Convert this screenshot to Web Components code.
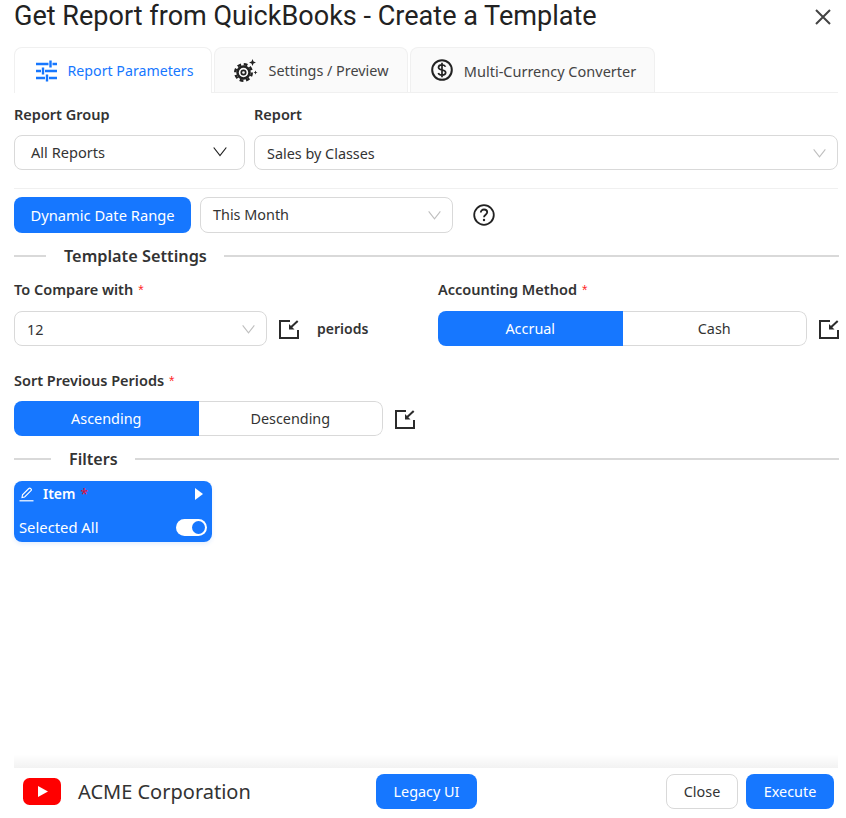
<!DOCTYPE html>
<html lang="en">
<head>
<meta charset="utf-8">
<title>Get Report from QuickBooks</title>
<style>
  html, body { margin: 0; padding: 0; background: #fff; }
  body { font: 14.4px/20px "Noto Sans", "Open Sans", "Liberation Sans", sans-serif; color: #333; }
</style>
</head>
<body>
<report-dialog></report-dialog>

<script>
(function () {
  "use strict";

  const ICONS = {
    sliders: `<svg width="21" height="22" viewBox="0 0 21 22" fill="none" stroke="currentColor" stroke-width="2.4"><path d="M0 4h12.500M16.500 4h4.500M14.500 .5v7M0 11h5M9 11h12M7 7.500v7M0 18h9M13 18h8M11 14.500v7"/></svg>`,
    gear: `<svg width="24" height="24" viewBox="0 0 24 24" fill="none" stroke="#222"><circle cx="9.500" cy="13.500" r="8.300" stroke-width="2.400" stroke-dasharray="3.800 2.720"/><circle cx="9.500" cy="13.500" r="6" stroke-width="2.500"/><circle cx="9.500" cy="13.500" r="2.200" stroke-width="1.700"/><path d="M18.500 0l1 2.500 2.500 1-2.500 1-1 2.500-1-2.500-2.500-1 2.500-1zM21.500 11.500l.6 1.400 1.400.6-1.400.6-.6 1.400-.6-1.400-1.400-.6 1.400-.6z" fill="#222" stroke="none"/></svg>`,
    dollar: `<svg width="22" height="22" viewBox="0 0 22 22" fill="none" stroke="#222"><circle cx="11" cy="11" r="9.800" stroke-width="2"/><path d="M14.500 7.800c-.5-1.300-1.800-2-3.500-2-2 0-3.500 1-3.500 2.600 0 3.500 7.200 1.700 7.200 5.200 0 1.600-1.600 2.600-3.700 2.600-1.800 0-3.200-.8-3.700-2.200M11 3.800v14.400" stroke-width="1.700"/></svg>`,
    close: `<svg width="16" height="16" viewBox="0 0 16 16" fill="none" stroke="#444" stroke-width="2"><path d="M1 1l14 14M15 1L1 15"/></svg>`,
    help: `<svg width="22" height="22" viewBox="0 0 22 22" fill="none" stroke="#222"><circle cx="11" cy="11" r="9.800" stroke-width="1.800"/><path d="M7.800 8.600c0-1.900 1.400-3.100 3.200-3.100s3.200 1.100 3.200 2.800c0 2.400-3.200 2.500-3.200 5" stroke-width="1.800"/><circle cx="11" cy="16" r="1.200" fill="#222" stroke="none"/></svg>`,
    expand: `<svg width="20" height="20" viewBox="0 0 20 20" fill="none" stroke="#2b2b2b" stroke-width="2"><path d="M11 2H1v17h18v-8"/><path d="M18.700 2l-7 6.500"/><path d="M10 5v5.500h5.500z" fill="#2b2b2b" stroke="none"/></svg>`,
    pencil: `<svg width="15" height="15" viewBox="0 0 15 15" fill="none" stroke="#fff" stroke-width="1.100"><path d="M3 10.500l.5-2.700L9.800 1.500c.5-.5 1.300-.5 1.800 0l.4.4c.5.5.5 1.300 0 1.800L5.700 10z"/><path d="M.5 13.800h14" stroke-width="1.200"/></svg>`,
    youtube: `<svg width="38" height="27" viewBox="0 0 38 27"><rect width="38" height="27" rx="6.500" fill="#f00"/><path d="M15 8l10 5.500-10 5.500z" fill="#fff"/></svg>`
  };

  const chevron = (color, size) => `<svg width="${size}" height="${size}" viewBox="0 0 14 14" fill="none" stroke="${color}" stroke-width="1.200"><path d="M.7 2.500l6.300 8 6.300-8"/></svg>`;

  // Plain text button, filled or outlined
  class AppButton extends HTMLElement {
    constructor() {
      super();
      this.attachShadow({ mode: "open" }).innerHTML = `
        <style>
          :host { display: inline-flex; align-items: center; justify-content: center; box-sizing: border-box;
            height: 35px; border-radius: 8px; background: #1677ff; color: #fff; font-size: 14.4px; white-space: nowrap; }
          :host([outline]) { background: #fff; color: #333; border: 1px solid #d9d9d9; }
        </style>
        <slot></slot>`;
    }
  }

  class AppSelect extends HTMLElement {
    static get observedAttributes() { return ["value"]; }
    constructor() {
      super();
      this.attachShadow({ mode: "open" }).innerHTML = `
        <style>
          :host { display: flex; align-items: center; justify-content: space-between; box-sizing: border-box;
            height: 35px; border: 1px solid #d9d9d9; border-radius: 8px; background: #fff;
            padding: 0 11px 0 12px; color: #333; font-size: 14.4px; }
          :host([strong]) { padding: 0 17px 2px 16px; font-size: 14.600px; }
          .arrow { display: flex; }
        </style>
        <span class="value"></span><span class="arrow"></span>`;
    }
    connectedCallback() { this._render(); }
    attributeChangedCallback() { this._render(); }
    _render() {
      this.shadowRoot.querySelector(".value").textContent = this.getAttribute("value") || "";
      this.shadowRoot.querySelector(".arrow").innerHTML = this.hasAttribute("strong")
        ? chevron("#222", 14) : chevron("#bfbfbf", 13);
    }
  }

  class FieldLabel extends HTMLElement {
    constructor() {
      super();
      this.attachShadow({ mode: "open" }).innerHTML = `
        <style>
          :host { display: block; font-size: 14.500px; line-height: 20px; font-weight: 600; color: #333; }
          .req { display: none; color: #ff2a2a; font-weight: 400; font-size: 14px; margin-left: 5px; font-family: "Liberation Sans", sans-serif; }
          :host([required]) .req { display: inline; }
        </style>
        <slot></slot><span class="req">*</span>`;
    }
  }

  // Two part toggle, the first value is the picked one
  class SegToggle extends HTMLElement {
    constructor() {
      super();
      this.attachShadow({ mode: "open" }).innerHTML = `
        <style>
          :host { display: grid; grid-template-columns: 1fr 1fr; box-sizing: border-box; height: 35px;
            border-radius: 8px; overflow: hidden; font-size: 14.4px; }
          span { display: flex; align-items: center; justify-content: center; color: #333; padding-top: 1px; box-sizing: border-box; }
          span.on { background: #1677ff; color: #fff; }
          span.off { border: 1px solid #d9d9d9; border-left: 0; border-radius: 0 8px 8px 0; }
        </style>
        <span class="on"></span><span class="off"></span>`;
    }
    connectedCallback() {
      const [a, b] = (this.getAttribute("options") || "").split("|");
      this.shadowRoot.querySelector(".on").textContent = a;
      this.shadowRoot.querySelector(".off").textContent = b;
    }
  }

  class SectionDivider extends HTMLElement {
    constructor() {
      super();
      this.attachShadow({ mode: "open" }).innerHTML = `
        <style>
          :host { display: flex; align-items: center; gap: 17px; font-size: 16.300px; line-height: 22px; font-weight: 600; color: #333; }
          i { height: 2px; background: #d9d9d9; }
          .l { width: var(--lead, 32px); }
          .r { flex: 1; }
          span { padding-left: 1px; }
        </style>
        <i class="l"></i><span><slot></slot></span><i class="r"></i>`;
    }
  }

  class DialogTab extends HTMLElement {
    constructor() {
      super();
      this.attachShadow({ mode: "open" }).innerHTML = `
        <style>
          :host { display: flex; align-items: center; justify-content: center; gap: 11px; box-sizing: border-box;
            height: 45px; padding-top: 2px; border: 1px solid #f0f0f0; border-bottom: 0; border-radius: 8px 8px 0 0;
            background: #fafafa; color: #444; font-size: 14.4px; }
          :host([active]) { background: #fff; color: #1677ff; height: 46px; padding: 0 0 0 3px; font-size: 14.200px; }
          ::slotted(*) { display: flex; }
        </style>
        <slot name="icon"></slot><slot></slot>`;
    }
  }

  class FilterCard extends HTMLElement {
    constructor() {
      super();
      this.attachShadow({ mode: "open" }).innerHTML = `
        <style>
          :host { display: flex; flex-direction: column; justify-content: space-between; box-sizing: border-box;
            width: 198px; height: 61px; padding: 3px 5px 5px 5px; background: #1677ff; color: #fff;
            border-radius: 8px; box-shadow: 0 2px 4px rgba(22,119,255,.12); font-size: 14.800px; }
          .top, .bottom { display: flex; align-items: center; }
          .top { height: 20px; font-size: 14px; }
          .pencil { display: flex; margin-right: 9px; }
          .name { font-weight: 600; }
          .req { color: #e0103a; margin-left: 5px; font-weight: 400; }
          .caret { margin-left: auto; margin-right: 4px; width: 0; height: 0;
            border-left: 8px solid #fff; border-top: 6px solid transparent; border-bottom: 6px solid transparent; }
          .bottom { justify-content: space-between; height: 20px; }
          .switch { width: 31px; height: 17px; border-radius: 9px; background: #fff; position: relative; margin-bottom: -1px; }
          .knob { position: absolute; right: 2px; top: 2px; width: 13px; height: 13px; border-radius: 50%; background: #1677ff; }
        </style>
        <div class="top">
          <span class="pencil">${ICONS.pencil}</span>
          <span class="name">Item</span><span class="req">*</span>
          <span class="caret"></span>
        </div>
        <div class="bottom">
          <span>Selected All</span>
          <span class="switch"><span class="knob"></span></span>
        </div>`;
    }
  }

  class ReportDialog extends HTMLElement {
    constructor() {
      super();
      this.attachShadow({ mode: "open" }).innerHTML = `
        <style>
          :host { display: flex; flex-direction: column; box-sizing: border-box; width: 846px; height: 818px; overflow: hidden; }
          .head { display: flex; align-items: center; justify-content: space-between; height: 33px; padding: 0 15px 0 14px; }
          h1 { margin: 0; font: 400 27.050px/33px Roboto, "Noto Sans", sans-serif; color: #222; }
          .close { display: flex; }
          .body { flex: 1; padding: 14px 8px 0 14px; min-height: 0; }
          .tabs { display: flex; gap: 2px; box-sizing: border-box; height: 46px; border-bottom: 1px solid #f0f0f0; }
          .tabs dialog-tab:nth-child(1) { width: 198px; }
          .tabs dialog-tab:nth-child(2) { width: 194px; }
          .tabs dialog-tab:nth-child(3) { width: 245px; padding-left: 2px; padding-top: 1px; font-size: 14.500px; }
          .tabs .dollar { margin-top: -1px; }
          .group-row { display: grid; grid-template-columns: 231px 584px; gap: 9px; margin-top: 11px; }
          .group-row field-label { margin-bottom: 11px; }
          .sep { height: 1px; background: #f0f0f0; margin: 18px 0 8px; width: 824px; }
          .date-row { display: flex; align-items: center; height: 36px; }
          .date-row app-button { width: 177px; height: 36px; font-size: 14.700px; }
          .date-row app-select { width: 253px; height: 36px; margin-left: 9px; }
          .date-row .help { display: flex; margin-left: 20px; }
          .settings { margin-top: 12px; width: 825px; }
          .cols { display: grid; grid-template-columns: 424px 401px; margin-top: 12px; }
          .cols field-label { margin-bottom: 11px; }
          .line { display: flex; align-items: center; }
          .line .ic { display: flex; margin-left: 12px; }
          .periods { font-weight: 600; margin-left: 18px; font-size: 14px; }
          .sort { margin-top: 24px; }
          .sort field-label { margin-bottom: 10px; }
          .filters { margin-top: 12px; width: 825px; --lead: 37px; font-size: 16.100px; }
          filter-card { margin-top: 11px; }
          .foot { position: relative; display: grid; grid-template-columns: 362px 1fr auto; align-items: center; box-sizing: border-box; height: 50px;
            margin: 0 8px 0 14px; padding: 0 4px 4px 0; }
          .foot::before { content: ""; position: absolute; left: 0; right: 0; top: -14px; height: 14px;
            background: linear-gradient(to bottom, rgba(0,0,0,0), rgba(0,0,0,.05)); }
          .brand { display: flex; align-items: center; padding-left: 9px; font-size: 20px; gap: 17px; color: #333; }
          .brand span { display: flex; }
          .brand .name { padding-top: 2px; }
          .actions { display: flex; gap: 8px; }
          .foot app-button { height: 35px; padding-top: 2px; }
          .foot > div { display: flex; }
        </style>
        <header class="head">
          <h1>Get Report from QuickBooks - Create a Template</h1>
          <span class="close">${ICONS.close}</span>
        </header>
        <main class="body">
          <nav class="tabs">
            <dialog-tab active><span slot="icon">${ICONS.sliders}</span>Report Parameters</dialog-tab>
            <dialog-tab><span slot="icon">${ICONS.gear}</span>Settings / Preview</dialog-tab>
            <dialog-tab><span slot="icon" class="dollar">${ICONS.dollar}</span>Multi-Currency Converter</dialog-tab>
          </nav>
          <div class="group-row">
            <div><field-label>Report Group</field-label><app-select strong value="All Reports"></app-select></div>
            <div><field-label>Report</field-label><app-select value="Sales by Classes" style="padding-top:2px"></app-select></div>
          </div>
          <div class="sep"></div>
          <div class="date-row">
            <app-button>Dynamic Date Range</app-button>
            <app-select value="This Month"></app-select>
            <span class="help">${ICONS.help}</span>
          </div>
          <section-divider class="settings">Template Settings</section-divider>
          <div class="cols">
            <div>
              <field-label required>To Compare with</field-label>
              <div class="line">
                <app-select value="12" style="width:253px;padding-top:2px"></app-select>
                <span class="ic">${ICONS.expand}</span>
                <span class="periods">periods</span>
              </div>
            </div>
            <div>
              <field-label required>Accounting Method</field-label>
              <div class="line">
                <seg-toggle options="Accrual|Cash" style="width:369px"></seg-toggle>
                <span class="ic">${ICONS.expand}</span>
              </div>
            </div>
          </div>
          <div class="sort">
            <field-label required>Sort Previous Periods</field-label>
            <div class="line">
              <seg-toggle options="Ascending|Descending" style="width:369px"></seg-toggle>
              <span class="ic">${ICONS.expand}</span>
            </div>
          </div>
          <section-divider class="filters">Filters</section-divider>
          <filter-card></filter-card>
        </main>
        <footer class="foot">
          <div class="brand"><span>${ICONS.youtube}</span><span class="name">ACME Corporation</span></div>
          <div><app-button style="width:101px">Legacy UI</app-button></div>
          <div class="actions">
            <app-button outline style="width:72px">Close</app-button>
            <app-button style="width:88px">Execute</app-button>
          </div>
        </footer>`;
    }
  }

  customElements.define("app-button", AppButton);
  customElements.define("app-select", AppSelect);
  customElements.define("field-label", FieldLabel);
  customElements.define("seg-toggle", SegToggle);
  customElements.define("section-divider", SectionDivider);
  customElements.define("dialog-tab", DialogTab);
  customElements.define("filter-card", FilterCard);
  customElements.define("report-dialog", ReportDialog);
})();
</script>
</body>
</html>
